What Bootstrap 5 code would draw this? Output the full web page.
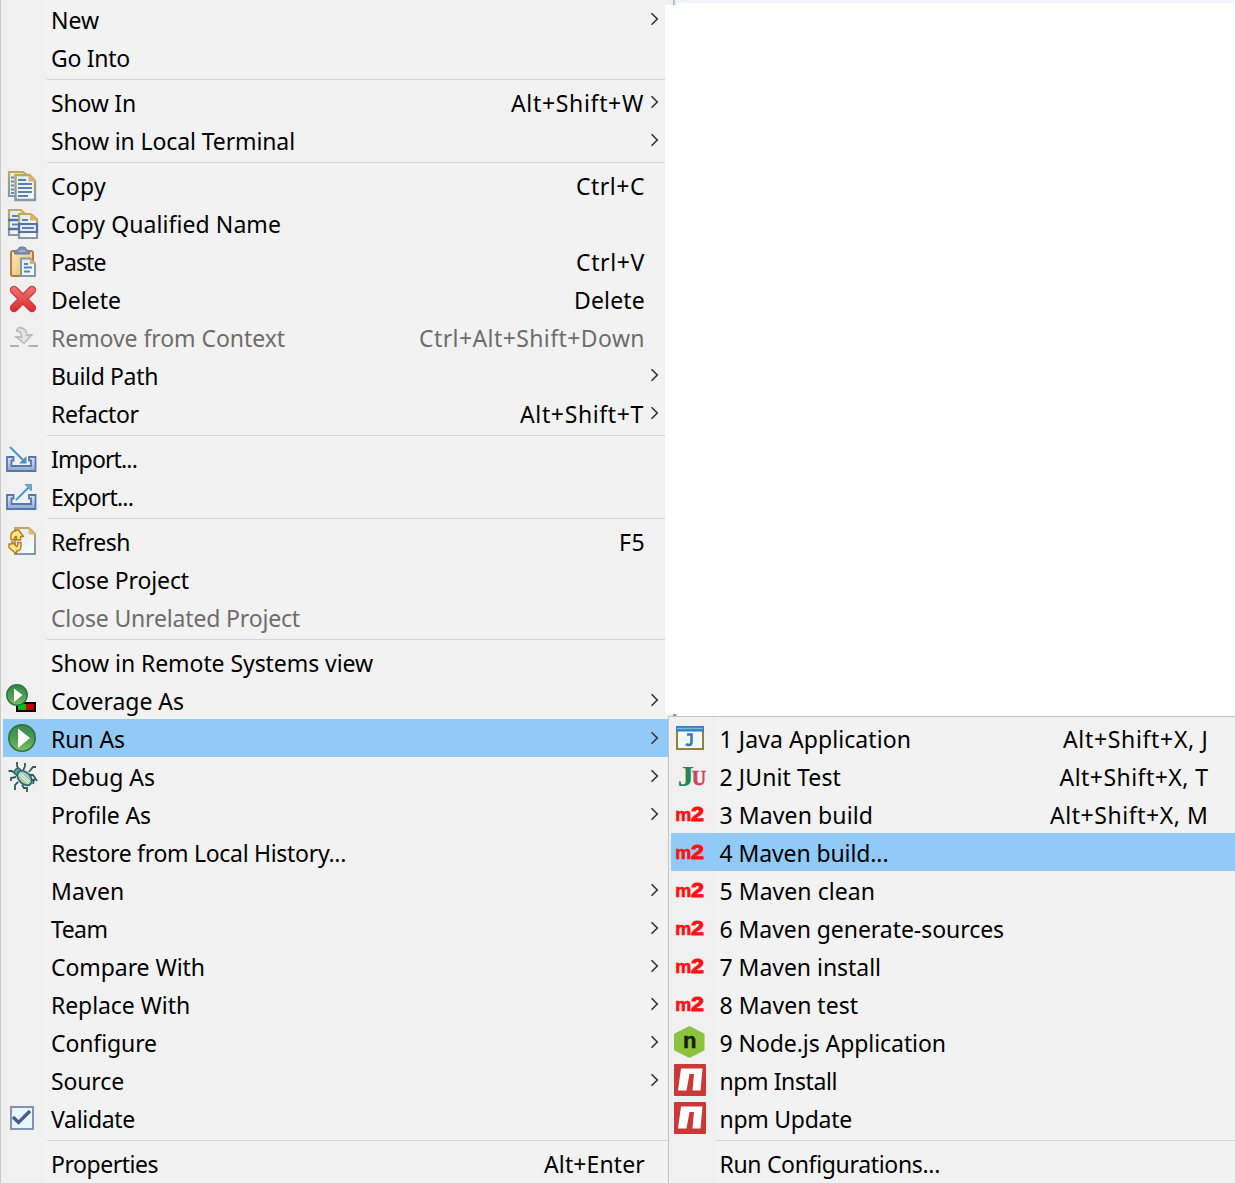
<!DOCTYPE html>
<html lang="en">
<head>
<meta charset="utf-8">
<title>Project context menu</title>
<link href="https://cdn.jsdelivr.net/npm/bootstrap@5.3.0/dist/css/bootstrap.min.css" rel="stylesheet">
<script src="https://cdn.jsdelivr.net/npm/bootstrap@5.3.0/dist/js/bootstrap.bundle.min.js"></script>
<style>
  body{font-family:"Noto Sans","Open Sans",sans-serif;font-size:23px;line-height:38px;color:#000;background:#f1f1f1;width:1235px;height:1183px;overflow:hidden}
  .main-menu{width:668px;height:1183px;border-left:1px solid #c9c9c9;padding-left:2px;background:linear-gradient(90deg,#f0f0f0 46px,#f2f2f2 46px)}
  .entry{height:38px;color:#000}
  .entry.on{background:#91c9f7}
  .entry.off{color:#6d6d6d}
  .gutter{width:44px;height:38px;flex:none;display:block}
  .caption,.keys{white-space:pre;position:relative;top:1px}
  .caption{margin-left:4px}
  .main-menu .keys{margin-right:23px}
  .arrow-next{width:12px;height:38px;margin-left:-18px;margin-right:7px;flex:none}
  .rule{height:7px;padding-top:3px;margin-left:44px}
  .rule::before{content:"";display:block;height:1px;background:#d5d5d5}
  .side{width:567px}
  .top-strip{height:5px;background:linear-gradient(90deg,#f0f0f0 5px,#a9a9ad 5px,#d8d8de 7px,#f3f3fb 8px)}
  .top-strip::after{content:"";display:block;height:2px;margin-left:9px;background:#fff;position:relative;top:3px}
  .blank{height:709px;margin-left:-3px;background:#fff;position:relative}
  .edge{height:2px;background:linear-gradient(90deg,#f0f0f0 5px,#999 5px,#999 8px,#fff 9px)}
  .sub-menu{height:467px;border:1px solid #c3c3c3;border-right:0;border-bottom:0;padding:2px 0 0 2px;background:linear-gradient(90deg,#f0f0f0 46px,#f2f2f2 46px)}
  .sub-menu .caption{margin-left:4.500px}
  .sub-menu .keys{margin-right:26.500px}
  .sub-menu .rule{margin-left:45px}
</style>
</head>
<body>
<svg width="0" height="0" class="position-absolute">
  <defs>
    <linearGradient id="paper" x1="0" y1="0" x2="1" y2="1"><stop offset="0" stop-color="#d9ebf8"/><stop offset="1" stop-color="#fafdff"/></linearGradient>
    <linearGradient id="edgeg" x1="0" y1="0" x2="0" y2="1"><stop offset="0" stop-color="#c2a75a"/><stop offset="1" stop-color="#8797a4"/></linearGradient>
    <linearGradient id="green" x1="0" y1="0" x2="0" y2="1"><stop offset="0" stop-color="#39884c"/><stop offset=".5" stop-color="#4b9b52"/><stop offset="1" stop-color="#80bd62"/></linearGradient>
    <linearGradient id="redg" gradientUnits="userSpaceOnUse" x1="0" y1="6" x2="0" y2="32"><stop offset="0" stop-color="#f4796e"/><stop offset="1" stop-color="#dc2631"/></linearGradient>
    <linearGradient id="trayg" x1="0" y1="0" x2="0" y2="1"><stop offset="0" stop-color="#dce8f6"/><stop offset="1" stop-color="#8ba9d6"/></linearGradient>
    <linearGradient id="board" x1="0" y1="0" x2="1" y2="1"><stop offset="0" stop-color="#fbe9bd"/><stop offset="1" stop-color="#e5b96c"/></linearGradient>
    <symbol id="copy" viewBox="3 0 44 38">
      <path d="M9 6H23L28 10V30H9Z" fill="url(#paper)" stroke="url(#edgeg)" stroke-width="2.200"/>
      <path d="M11 11.500h3M11 15.500h3M11 19.500h3M11 23.500h3M11 27h3" stroke="#6489b3" stroke-width="2"/>
      <path d="M15.500 9H29.500L35 15V34H15.500Z" fill="url(#paper)" stroke="url(#edgeg)" stroke-width="2.400"/>
      <path d="M28.500 8V15.500h7.500Z" fill="#d9b565"/>
      <path d="M18 14h8M18 18H32M18 22H32M18 26H32M18 30H28" stroke="#5c80b0" stroke-width="2"/>
    </symbol>
    <symbol id="copyq" viewBox="3 0 44 38">
      <path d="M9 6H21L26 11V31H9Z" fill="url(#paper)" stroke="url(#edgeg)" stroke-width="2.200"/>
      <path d="M20.500 5v6.500h6Z" fill="#d9b565"/>
      <path d="M12 12h6M12 20.500h6" stroke="#5c80b0" stroke-width="2"/><path d="M8 16h11M8 25h11" stroke="#596f9f" stroke-width="2.400"/>
      <path d="M19 10H31L37 15.500V34H19Z" fill="url(#paper)" stroke="url(#edgeg)" stroke-width="2.200"/>
      <path d="M30 9v7.500h8Z" fill="#d9b565"/>
      <path d="M22 16h6" stroke="#5c80b0" stroke-width="2"/>
      <path d="M19 20H37V28H19Z" fill="#dfecfa" stroke="#596f9f" stroke-width="2.200"/><path d="M22 24H34" stroke="#5c80b0" stroke-width="2"/>
    </symbol>
    <symbol id="paste" viewBox="3 0 44 38">
      <rect x="11" y="9" width="22" height="25" rx="2" fill="url(#board)" stroke="#b77b3f" stroke-width="2"/>
      <path d="M14.500 12V9.500Q15 8 18 8Q18.500 5 21 5H23Q26 5 26.500 8Q29 8 29.500 9.500V12Z" fill="#7f8fb4" stroke="#687497"/><path d="M18.500 9h7" stroke="#a4b1cc" stroke-width="2"/>
      <path d="M21 16.500H30L35 21.500V34H21Z" fill="url(#paper)" stroke="#849aa4" stroke-width="2"/><path d="M30 16V22h5.500Z" fill="#d6b164"/>
      <path d="M24 22h4M24 25.500H32M24 29.500H30" stroke="#5c80b0" stroke-width="1.800"/>
    </symbol>
    <symbol id="delete" viewBox="3 0 44 38">
      <g fill="none" stroke-linecap="round"><path d="M14 10 32 28M32 10 14 28" stroke="#c43d40" stroke-width="8.400"/><path d="M14 10 32 28M32 10 14 28" stroke="url(#redg)" stroke-width="6"/></g>
    </symbol>
    <symbol id="remove" viewBox="3 0 44 38">
      <path d="M17 13Q17 9.500 20 9.500Q26 10 27 17H31.500L24 25.500 16.500 19H21.500Q21 13 17 13Z" fill="#e4e4e4" stroke="#b4b4b4" stroke-width="1.800" stroke-dasharray="2 .5"/>
      <path d="M10 28h9M28.500 28H38" stroke="#b0b0b0" stroke-width="1.800"/>
    </symbol>
    <symbol id="tray" viewBox="3 0 44 38">
      <path d="M7 18H13.500V21.500H11.500V27H31V21.500H29V18H35.500V32H7Z" fill="url(#trayg)" stroke="#5876a9" stroke-width="1.800"/>
    </symbol>
    <symbol id="import" viewBox="3 0 44 38"><use href="#tray" x="3" width="44" height="38"/>
      <path d="M10 8 23 21" stroke="#4b96c6" stroke-width="2"/><path d="M26.500 17V24.500H19Z" fill="#4f8fbd"/>
    </symbol>
    <symbol id="export" viewBox="3 0 44 38"><use href="#tray" x="3" width="44" height="38"/>
      <path d="M16 23 29 10" stroke="#4b96c6" stroke-width="2"/><path d="M25 7.500H31.500V14Z" fill="#7ba8c2" stroke="#6b9fbd"/>
    </symbol>
    <symbol id="refresh" viewBox="3 0 44 38">
      <path d="M15 6H29L35 12V32H15Z" fill="url(#paper)" stroke="url(#edgeg)" stroke-width="2"/><path d="M28.500 5.500V12.500H35.500Z" fill="#dbbb77"/>
      <path d="M11 17.500Q9.500 10 16 8.500L15.500 8H18.500L23.500 14.500H20.500V18H16.500V14.500Q14 14.500 14.500 18Z" fill="#fde78a" stroke="#b87917" stroke-width="1.400" stroke-linejoin="round"/>
      <path d="M21 20.500Q22 29 16.500 29V32L9 25.500V22H12V19.500L16.500 24.500Q18.500 23.500 17.500 20.500Z" fill="#fde78a" stroke="#b87917" stroke-width="1.400" stroke-linejoin="round"/>
    </symbol>
    <symbol id="coverage" viewBox="3 0 44 38">
      <path d="M16 21H36V31H16Z"/><path d="M18 23H26V29H18Z" fill="#00bd15"/><path d="M26 23H34V29H26Z" fill="#c30000"/>
      <circle cx="17" cy="14" r="10.200" fill="url(#green)" stroke="#287640" stroke-width="1.500"/><path d="M14 7.500 22.500 14 14 21Z" fill="#fff"/>
    </symbol>
    <symbol id="run" viewBox="3 0 44 38">
      <circle cx="22" cy="19" r="13.200" fill="url(#green)" stroke="#287640" stroke-width="1.600"/><path d="M18 9.500 30 19 18 29Z" fill="#fff"/>
    </symbol>
    <symbol id="debug" viewBox="3 0 44 38">
      <path d="M17 5V9L20 14M25 6V9L23 14M8.500 14H12L16 17M36 10H33L29 15M16 20 11 21V24M18 25 15 28V33M22 28 24 31H27V35M29 18H33L37 24M31 23H34L33 27" stroke="#315b58" stroke-width="1.800" fill="none"/>
      <circle cx="18" cy="15" r="3.500" fill="#6baa9f" stroke="#316c78" stroke-width="1.500"/>
      <ellipse cx="24.500" cy="21" rx="8.500" ry="5.800" transform="rotate(45 24.500 21)" fill="#a4cba5" stroke="#28657c" stroke-width="1.800"/>
      <path d="M20 17 29 26" stroke="#edf6e9" stroke-width="3"/><path d="M20 17 29 26" stroke="#6ba483" stroke-width=".8"/>
    </symbol>
    <symbol id="check" viewBox="3 0 44 38">
      <path d="M11 8H33V30H11Z" fill="#e7f7ff" stroke="#8492b1" stroke-width="2"/><path d="M13 18 18.500 23.500 30 12" fill="none" stroke="#465d83" stroke-width="3.200"/>
    </symbol>
    <symbol id="java" viewBox="3 0 44 38">
      <path d="M9 8H35V30H9Z" fill="#eef8ff" stroke="#92803b" stroke-width="2"/><path d="M8 7H36V12.500H8Z" fill="#347fbd"/><path d="M9 9.500H35" stroke="#6fbce9" stroke-width="1.500"/>
      <path d="M19 15.500H23.500V23Q23.500 26 21 26Q19 26 18 25" fill="none" stroke="#3f77a8" stroke-width="2.500"/>
    </symbol>
    <symbol id="junit" viewBox="3 0 44 38">
      <text x="9.500" y="28.500" font-family="Liberation Serif" font-weight="bold" font-size="29" fill="#248650" textLength="16.500" lengthAdjust="spacingAndGlyphs">J</text>
      <text x="24" y="28.200" font-family="Liberation Serif" font-weight="bold" font-size="20" fill="#cc4354" stroke="#cc4354" stroke-width=".7" textLength="14" lengthAdjust="spacingAndGlyphs">U</text>
    </symbol>
    <symbol id="m2" viewBox="3 0 44 38">
      <g font-family="Liberation Sans" font-weight="bold" fill="#f11" stroke="#f11"><text x="7.300" y="26" font-size="19" stroke-width=".7" textLength="16" lengthAdjust="spacingAndGlyphs">m</text>
      <text x="23" y="26.300" font-size="20.500" stroke-width="1" textLength="13" lengthAdjust="spacingAndGlyphs">2</text></g>
    </symbol>
    <symbol id="node" viewBox="3 0 44 38">
      <path d="M21.500 3.500 36 11V27L21.500 34.500 6.500 27V11Z" fill="#8bc33e" stroke="#8bc33e" stroke-linejoin="round"/>
      <text x="15" y="24.700" font-family="Liberation Sans" font-weight="bold" font-size="22" fill="#18230e" stroke="#18230e" stroke-width=".5">n</text>
    </symbol>
    <symbol id="npm" viewBox="3 0 44 38">
      <rect x="6" y="3" width="32" height="32" rx="1" fill="#ca3838"/><path d="M13 7.500H34.500L32.500 29.500H24.500L26 13H21.500L18.500 29.500H10Z" fill="#fff"/>
    </symbol>
    <symbol id="next" viewBox="0 0 12 38"><path d="M2.500 13.300 8.300 19 2.500 24.700" fill="none" stroke="#333" stroke-width="1.600"/></symbol>
  </defs>
</svg>
<div class="d-flex align-items-start">
  <nav class="main-menu flex-shrink-0" id="projectMenu"></nav>
  <div class="side flex-shrink-0">
    <div class="top-strip"></div>
    <div class="blank"></div>
    <div class="edge"></div>
    <nav class="sub-menu" id="runMenu"></nav>
  </div>
</div>
<script>
// label, label width, icon, shortcut, shortcut width, opens submenu, state
const project = [
 ['New',48,,,,1],['Go Into',79],0,
 ['Show In',85,,'Alt+Shift+W',133,1],['Show in Local Terminal',244,,,,1],0,
 ['Copy',55,'copy','Ctrl+C',69],['Copy Qualified Name',230,'copyq'],['Paste',54.500,'paste','Ctrl+V',69],
 ['Delete',70,'delete','Delete',71],['Remove from Context',234,'remove','Ctrl+Alt+Shift+Down',226,,'off'],
 ['Build Path',107,,,,1],['Refactor',87.500,,'Alt+Shift+T',124,1],0,
 ['Import...',86,'import'],['Export...',82,'export'],0,
 ['Refresh',79,'refresh','F5',26],['Close Project',138],['Close Unrelated Project',249,,,,,'off'],0,
 ['Show in Remote Systems view',322],['Coverage As',133,'coverage',,,1],['Run As',74,'run',,,1,'on'],
 ['Debug As',104,'debug',,,1],['Profile As',100,,,,1],['Restore from Local History...',295],
 ['Maven',73.500,,,,1],['Team',56.500,,,,1],['Compare With',154,,,,1],['Replace With',139,,,,1],
 ['Configure',106,,,,1],['Source',73,,,,1],['Validate',84,'check'],0,['Properties',107,,'Alt+Enter',101]
];
const run = [
 ['1 Java Application',191.500,'java','Alt+Shift+X, J',145.500],['2 JUnit Test',121.500,'junit','Alt+Shift+X, T',149],
 ['3 Maven build',153.500,'m2','Alt+Shift+X, M',158.500],['4 Maven build...',169,'m2',,,,'on'],
 ['5 Maven clean',155.500,'m2'],['6 Maven generate-sources',284.500,'m2'],['7 Maven install',161.500,'m2'],
 ['8 Maven test',138.500,'m2'],['9 Node.js Application',226.500,'node'],['npm Install',117.500,'npm'],['npm Update',132.500,'npm'],0,
 ['Run Configurations...',220.500]
];
function fill(id, rows){
  document.getElementById(id).innerHTML = rows.map(r => {
    if(!r) return '<div class="rule"></div>';
    const [label,w,icon,keys,kw,more,state] = r;
    return `<div class="entry d-flex align-items-center ${state||''}">
      <svg class="gutter">${icon?`<use href="#${icon}" width="44" height="38"/>`:''}</svg><span class="caption" data-w="${w}">${label}</span>
      <span class="keys ms-auto" ${keys?`data-w="${kw}"`:''}>${keys||''}</span>${more?'<svg class="arrow-next"><use href="#next"/></svg>':''}</div>`;
  }).join('');
}
fill('projectMenu',project); fill('runMenu',run);
// tracking that brings each label to its listed width
document.querySelectorAll('[data-w]').forEach(e => {
  const d = e.dataset.w - e.getBoundingClientRect().width;
  e.style.letterSpacing = (d / e.textContent.length).toFixed(3) + 'px';
});
</script>
</body>
</html>
